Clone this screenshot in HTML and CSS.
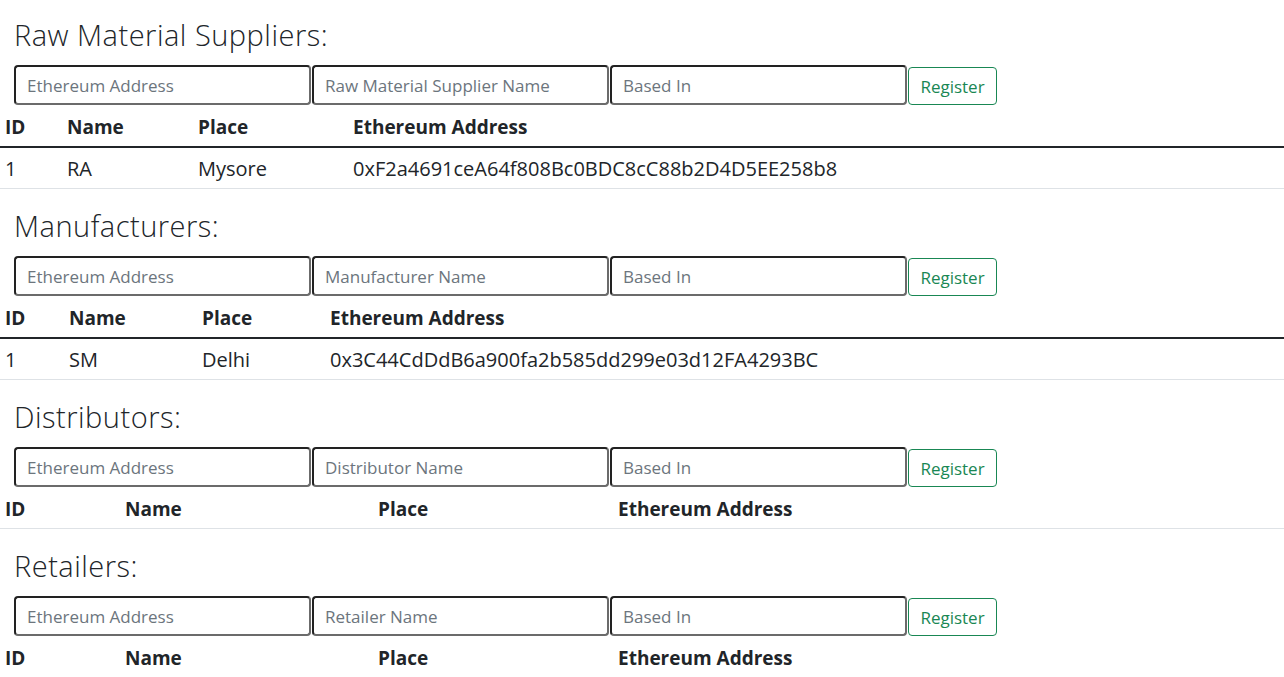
FILE: index.html
```html
<!DOCTYPE html>
<html>
<head>
<meta charset="utf-8">
<link rel="stylesheet" href="styles.css">
</head>
<body>
<section class="block">
  <h3 class="title">Raw Material Suppliers:</h3>
  <form class="reg-form">
    <input class="field" placeholder="Ethereum Address">
    <input class="field" placeholder="Raw Material Supplier Name">
    <input class="field" placeholder="Based In">
    <button type="button" class="btn-register">Register</button>
  </form>
  <table class="list">
    <colgroup><col style="width:62px"><col style="width:131px"><col style="width:155px"><col></colgroup>
    <thead><tr><th>ID</th><th>Name</th><th>Place</th><th>Ethereum Address</th></tr></thead>
    <tbody><tr><td>1</td><td>RA</td><td>Mysore</td><td>0xF2a4691ceA64f808Bc0BDC8cC88b2D4D5EE258b8</td></tr></tbody>
  </table>
</section>
<section class="block">
  <h3 class="title">Manufacturers:</h3>
  <form class="reg-form">
    <input class="field" placeholder="Ethereum Address">
    <input class="field" placeholder="Manufacturer Name">
    <input class="field" placeholder="Based In">
    <button type="button" class="btn-register">Register</button>
  </form>
  <table class="list">
    <colgroup><col style="width:64px"><col style="width:133px"><col style="width:128px"><col></colgroup>
    <thead><tr><th>ID</th><th>Name</th><th>Place</th><th>Ethereum Address</th></tr></thead>
    <tbody><tr><td>1</td><td>SM</td><td>Delhi</td><td>0x3C44CdDdB6a900fa2b585dd299e03d12FA4293BC</td></tr></tbody>
  </table>
</section>
<section class="block">
  <h3 class="title">Distributors:</h3>
  <form class="reg-form">
    <input class="field" placeholder="Ethereum Address">
    <input class="field" placeholder="Distributor Name">
    <input class="field" placeholder="Based In">
    <button type="button" class="btn-register">Register</button>
  </form>
  <table class="list empty">
    <colgroup><col style="width:120px"><col style="width:253px"><col style="width:240px"><col></colgroup>
    <thead><tr><th>ID</th><th>Name</th><th>Place</th><th>Ethereum Address</th></tr></thead>
    <tbody></tbody>
  </table>
</section>
<section class="block">
  <h3 class="title">Retailers:</h3>
  <form class="reg-form">
    <input class="field" placeholder="Ethereum Address">
    <input class="field" placeholder="Retailer Name">
    <input class="field" placeholder="Based In">
    <button type="button" class="btn-register">Register</button>
  </form>
  <table class="list empty">
    <colgroup><col style="width:120px"><col style="width:253px"><col style="width:240px"><col></colgroup>
    <thead><tr><th>ID</th><th>Name</th><th>Place</th><th>Ethereum Address</th></tr></thead>
    <tbody></tbody>
  </table>
</section>
</body>
</html>
```

FILE: styles.css
```css
html, body {
  margin: 0;
  padding: 0;
  background: #fff;
}
body {
  font-family: "Open Sans", "Noto Sans", sans-serif;
  color: #212529;
}
.block {
  padding-top: 20px;
}
.block:first-child {
  padding-top: 18px;
}
.title {
  margin: 0 0 13px 0;
  padding-left: 14px;
  font-family: "Open Sans", sans-serif;
  font-weight: 300;
  font-size: 29px;
  letter-spacing: 0.5px;
  line-height: 34px;
  color: #212529;
}
.reg-form {
  display: flex;
  align-items: flex-end;
  gap: 1px;
  padding-left: 14px;
  margin: 0;
}
.field {
  box-sizing: border-box;
  width: 297px;
  height: 40px;
  margin: 0;
  padding: 0 11px;
  font-family: "Open Sans", sans-serif;
  font-size: 17px;
  color: #212529;
  background: #fff;
  border: 2px solid;
  border-color: #222 #6b6b6b #6b6b6b #222;
  border-radius: 4px;
  outline: none;
}
.field::placeholder {
  color: #6c757d;
}
.btn-register {
  box-sizing: border-box;
  height: 38px;
  width: 89px;
  padding: 0;
  font-family: "Open Sans", sans-serif;
  font-size: 17px;
  color: #198754;
  background: #fff;
  border: 1px solid #198754;
  border-radius: 4px;
}
.list {
  width: 100%;
  table-layout: fixed;
  border-collapse: collapse;
  margin-top: 2px;
  font-size: 20px;
}
.list th, .list td {
  padding: 0 5px;
  height: 40px;
  text-align: left;
  vertical-align: middle;
  white-space: nowrap;
}
.list th {
  font-weight: 700;
  font-size: 19px;
  height: 39px;
  border-bottom: 2px solid #212529;
}
.list.empty th {
  border-bottom: 1px solid #dee2e6;
}
.list td {
  border-bottom: 1px solid #dee2e6;
}
```
